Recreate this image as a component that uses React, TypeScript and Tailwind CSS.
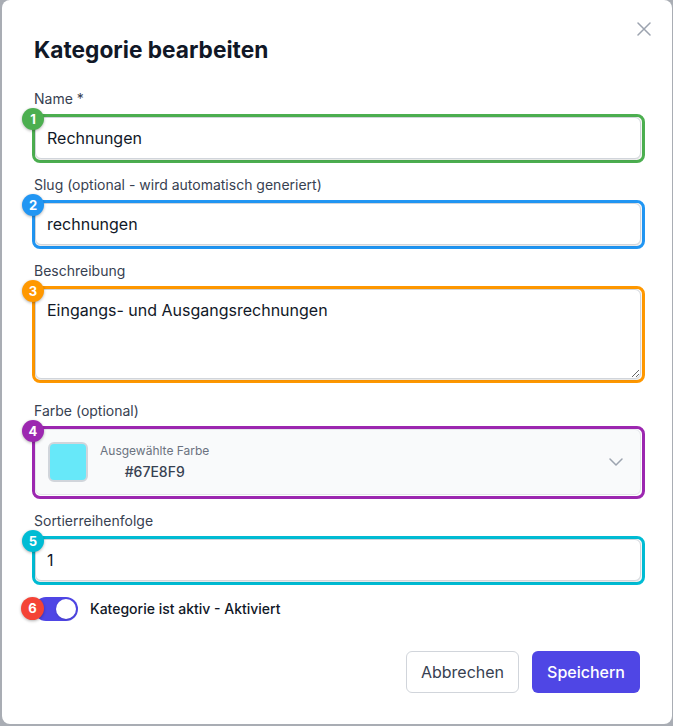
import React from "react";

function Badge({ n, color }: { n: number; color: string }) {
  return (
    <div
      className={`absolute left-[-13px] top-[-9px] z-10 flex h-[22px] w-[22px] items-center justify-center rounded-full text-[13px] font-bold leading-none text-white shadow-[0_1px_3px_rgba(0,0,0,0.3)] ${color}`}
    >
      {n}
    </div>
  );
}

function Field({
  label,
  n,
  badge,
  border,
  children,
  className = "",
}: {
  label: string;
  n: number;
  badge: string;
  border: string;
  children: React.ReactNode;
  className?: string;
}) {
  return (
    <div className={className}>
      <div className="mb-[5px] text-sm leading-5 text-[#374151]">{label}</div>
      <div
        className={`relative -ml-[2px] -mr-[5px] rounded-[8px] border-[3px] pr-[1px] pb-[1px] ${border}`}
      >
        <Badge n={n} color={badge} />
        {children}
      </div>
    </div>
  );
}

export default function App() {
  return (
    <div
      className="h-[726px] w-[673px] overflow-hidden bg-[#a9adb4]"
      style={{ fontFamily: '"Inter", "Noto Sans", "Liberation Sans", sans-serif' }}
    >
      <div className="relative ml-[2px] h-[724px] w-[670px] rounded-lg bg-white px-8 pt-9">
        <button className="absolute right-[21px] top-[22px] text-[#9ca3af]">
          <svg width="14" height="14" viewBox="0 0 14 14" fill="none" stroke="currentColor" strokeWidth="1.5" strokeLinecap="round">
            <path d="M1 1L13 13M13 1L1 13" />
          </svg>
        </button>
        <h2 className="text-[22.7px] font-bold leading-[28px] text-[#111827]">Kategorie bearbeiten</h2>

        <Field className="mt-[25px]" label="Name *" n={1} badge="bg-[#4caf50]" border="border-[#4caf50]">
          <div className="flex h-[42px] items-center rounded-md border border-[#d1d5db] bg-white pl-[11px] pr-3 text-base text-[#111827] shadow-sm">
            Rechnungen
          </div>
        </Field>

        <Field className="mt-3" label="Slug (optional - wird automatisch generiert)" n={2} badge="bg-[#2196f3]" border="border-[#2196f3]">
          <div className="flex h-[42px] items-center rounded-md border border-[#d1d5db] bg-white pl-[11px] pr-3 text-base text-[#111827] shadow-sm">
            rechnungen
          </div>
        </Field>

        <Field className="mt-3" label="Beschreibung" n={3} badge="bg-[#ff9800]" border="border-[#ff9800]">
          <textarea
            readOnly
            rows={3}
            defaultValue="Eingangs- und Ausgangsrechnungen"
            className="block h-[90px] w-full rounded-md border border-[#d1d5db] bg-white pl-[11px] pr-3 py-2 text-base leading-6 text-[#111827] shadow-sm outline-none"
          />
        </Field>

        <Field className="mt-[18px]" label="Farbe (optional)" n={4} badge="bg-[#9c27b0]" border="border-[#9c27b0]">
          <div className="flex h-[66px] items-center rounded-md border border-[#e5e7eb] bg-[#f9fafb] pl-3 pr-3">
            <div className="h-10 w-10 rounded-md border-2 border-[#d1d5db] bg-[#67E8F9]" />
            <div className="ml-3 flex flex-col items-center">
              <span className="text-xs leading-4 text-[#6b7280]">Ausgewählte Farbe</span>
              <span className="mt-[3px] text-sm font-medium leading-5 text-[#374151]">#67E8F9</span>
            </div>
            <svg className="ml-auto text-[#9ca3af]" width="24" height="24" viewBox="0 0 24 24" fill="none" stroke="currentColor" strokeWidth="1.5" strokeLinecap="round" strokeLinejoin="round">
              <path d="M6 9l6 6 6-6" />
            </svg>
          </div>
        </Field>

        <Field className="mt-3" label="Sortierreihenfolge" n={5} badge="bg-[#00bcd4]" border="border-[#00bcd4]">
          <div className="flex h-[42px] items-center rounded-md border border-[#d1d5db] bg-white pl-[11px] pr-3 text-base text-[#111827] shadow-sm">
            1
          </div>
        </Field>

        <div className="mt-3 flex items-center">
          <div className="relative h-6 w-11 rounded-full bg-[#4f46e5]">
            <div className="absolute right-[2px] top-[2px] h-5 w-5 rounded-full bg-white shadow" />
            <div className="absolute left-[-13px] top-[0px] z-10 flex h-[23px] w-[23px] items-center justify-center rounded-full bg-[#f44336] text-[13px] font-bold leading-none text-white shadow-[0_1px_3px_rgba(0,0,0,0.3)]">
              6
            </div>
          </div>
          <span className="ml-3 text-sm font-medium text-[#111827]">Kategorie ist aktiv - Aktiviert</span>
        </div>

        <div className="mt-[30px] flex justify-end gap-[13px]">
          <button className="h-[42px] rounded-md border border-[#d1d5db] bg-white px-[14px] text-base text-[#374151]">
            Abbrechen
          </button>
          <button className="h-[42px] rounded-md bg-[#4f46e5] px-[15px] text-base font-medium text-white">
            Speichern
          </button>
        </div>
      </div>
    </div>
  );
}
